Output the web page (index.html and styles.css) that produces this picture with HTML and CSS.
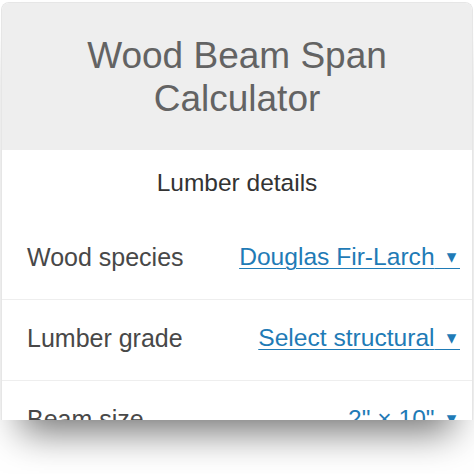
FILE: index.html
```html
<!DOCTYPE html>
<html lang="en">
<head>
  <meta charset="UTF-8" />
  <meta name="viewport" content="width=device-width, initial-scale=1" />
  <title>Wood Beam Span Calculator</title>
  <link rel="stylesheet" href="styles.css">
</head>
<body>

  <div class="card">
    <!-- Header -->
    <div class="head">
      <h1>Wood Beam Span Calculator</h1>
    </div>

    <div class="group-title">Lumber details</div>

    <div class="row">
      <span class="label">Wood species</span>
      <a class="select" href="#">Douglas Fir-Larch<span class="caret">&nbsp;&nbsp;▾&thinsp;</span></a>
    </div>

    <div class="row">
      <span class="label">Lumber grade</span>
      <a class="select" href="#">Select structural<span class="caret">&nbsp;&nbsp;▾&thinsp;</span></a>
    </div>

    <div class="row">
      <span class="label">Beam size</span>
      <a class="select" href="#">2" × 10"<span class="caret">&nbsp;&nbsp;▾&thinsp;</span></a>
    </div>
  </div>

</body>
</html>
```

FILE: styles.css
```css
body {
  margin: 0;
  height: 474px;
  overflow: hidden;
  background: #fff;
  font-family: 'Liberation Sans', Arial, sans-serif;
}

.card {
  margin: 2px 1px 0;
  height: 417px;
  overflow: hidden;
  border: 1px solid #e6e6e6;
  border-bottom: none;
  border-radius: 8px 8px 0 0;
  background: #fff;
  box-shadow: 0 32px 36px -20px rgba(0, 0, 0, 0.55);
}

/* Header */
.head {
  background: #eeeeee;
  padding: 31px 20px 30px;
  text-align: center;
}

.head h1 {
  margin: 0 auto;
  max-width: 340px;
  font-size: 37px;
  font-weight: normal;
  line-height: 43px;
  color: #636363;
}

.group-title {
  padding: 19px 0 22px;
  text-align: center;
  font-size: 24.5px;
  color: #333;
}

/* Rows */
.row {
  display: flex;
  justify-content: space-between;
  align-items: center;
  box-sizing: border-box;
  height: 81px;
  padding: 0 12px 4px 25px;
  border-bottom: 1px solid #eeeeee;
}

.label {
  font-size: 25px;
  color: #484848;
}

.select {
  font-size: 24.6px;
  color: #1f7bb6;
  text-decoration: underline;
  text-decoration-thickness: 1px;
  text-underline-offset: 3px;
}

.caret {
  font-family: 'DejaVu Sans', sans-serif;
  font-size: 19px;
  vertical-align: 2px;
}
```
